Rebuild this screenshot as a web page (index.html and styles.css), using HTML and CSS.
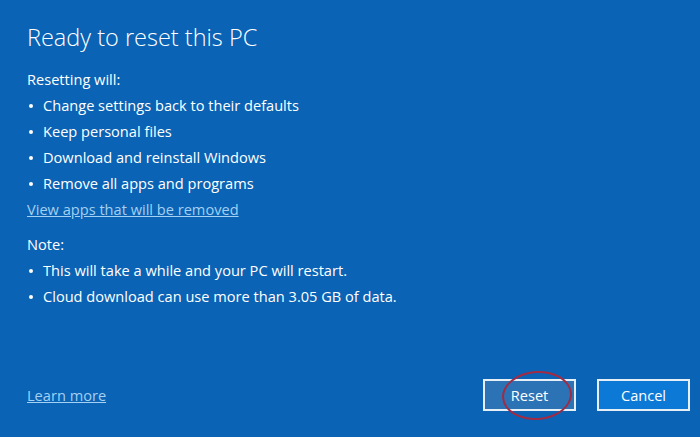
FILE: index.html
```html
<!DOCTYPE html>
<html>
<head>
<meta charset="utf-8">
<link rel="stylesheet" href="styles.css">
</head>
<body>
<div class="dialog">
  <h1 class="title">Ready to reset this PC</h1>
  <div class="section">
    <p class="line">Resetting will:</p>
    <ul class="list">
      <li>Change settings back to their defaults</li>
      <li>Keep personal files</li>
      <li>Download and reinstall Windows</li>
      <li>Remove all apps and programs</li>
    </ul>
    <a class="link" href="#">View apps that will be removed</a>
  </div>
  <div class="section note">
    <p class="line">Note:</p>
    <ul class="list">
      <li>This will take a while and your PC will restart.</li>
      <li>Cloud download can use more than 3.05 GB of data.</li>
    </ul>
  </div>
  <div class="footer">
    <a class="link" href="#">Learn more</a>
    <div class="buttons">
      <button class="btn btn-reset">Reset<span class="circle"></span></button>
      <button class="btn btn-cancel">Cancel</button>
    </div>
  </div>
</div>
</body>
</html>
```
FILE: styles.css
```css
html, body {
  margin: 0;
  padding: 0;
}
body {
  background: #0a63b4;
  font-family: "Open Sans", "Noto Sans", sans-serif;
  color: #ffffff;
}
.dialog {
  box-sizing: border-box;
  height: 437px;
  padding: 18px 10px 0 27px;
  display: flex;
  flex-direction: column;
}
.title {
  margin: 0;
  font-size: 23.5px;
  font-weight: 300;
  line-height: 38px;
}
.section {
  margin-top: 10px;
  font-size: 14.6px;
  line-height: 26px;
}
.note {
  margin-top: 9px;
}
.line {
  margin: 0;
}
.list {
  list-style: none;
  margin: 0;
  padding: 0;
}
.list li {
  position: relative;
  padding-left: 16px;
}
.list li::before {
  content: "";
  position: absolute;
  left: 2px;
  top: 12px;
  width: 4px;
  height: 4px;
  border-radius: 50%;
  background: #ffffff;
}
.link {
  color: #a3d0f3;
  text-decoration: underline;
  font-size: 14.6px;
}
.footer {
  margin-top: auto;
  padding-bottom: 26px;
  display: flex;
  justify-content: space-between;
  align-items: center;
}
.buttons {
  display: flex;
  gap: 21px;
}
.btn {
  position: relative;
  box-sizing: border-box;
  width: 93px;
  height: 32px;
  border: 2px solid #e6eef6;
  color: #ffffff;
  font-family: "Open Sans", "Noto Sans", sans-serif;
  font-size: 14.6px;
  padding: 0;
}
.btn-reset {
  background: #2c73b6;
}
.btn-cancel {
  background: #0c79d6;
}
.circle {
  position: absolute;
  left: 17px;
  top: -10px;
  width: 70px;
  height: 49px;
  box-sizing: border-box;
  border: 2.5px solid #a02b45;
  border-radius: 50%;
  transform: rotate(-4deg);
}
```
